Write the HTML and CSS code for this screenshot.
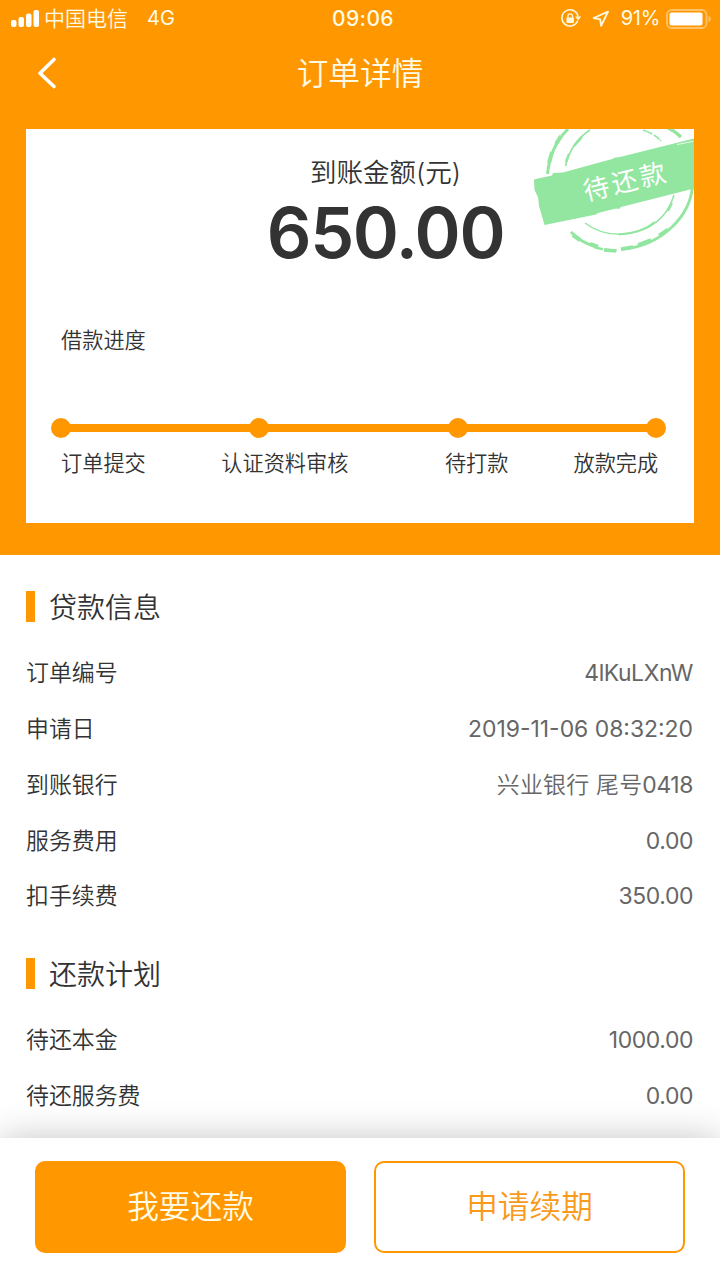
FILE: index.html
```html
<!DOCTYPE html>
<html lang="zh-CN">
<head>
<meta charset="utf-8">
<title>订单详情</title>
<link rel="stylesheet" href="styles.css">
</head>
<body>
<div class="app">
  <header class="hero">
    <div class="status">
      <div class="status-left">
        <svg class="signal" width="30" height="20" viewBox="0 0 30 20"><g fill="#fff"><rect x="1" y="11" width="5.500" height="7" rx="2"/><rect x="8.500" y="8" width="5.500" height="10" rx="2"/><rect x="16" y="4.500" width="5.500" height="13.500" rx="2"/><rect x="23.500" y="1" width="5.500" height="17" rx="2"/></g></svg>
        <span class="carrier">中国电信</span>
        <span class="network">4G</span>
      </div>
      <span class="clock">09:06</span>
      <div class="status-right">
        <svg class="lock" width="20" height="20" viewBox="0 0 20 20" fill="none" stroke="#fff8dc"><path d="M16.600 11.800A8.100 8.100 0 1 1 17 7.500" stroke-width="1.600"/><path d="M14 7.600h6.200l-3 4z" fill="#fff8dc" stroke="none"/><rect x="5.500" y="8.600" width="7.400" height="5.400" rx=".6" fill="#fff8dc" stroke="none"/><path d="M6.900 9V7.200a2.300 2.300 0 0 1 4.600 0V9" stroke-width="1.300"/></svg>
        <svg class="locate" width="18" height="18" viewBox="0 0 18 18" fill="none" stroke="#fff8dc" stroke-width="1.900" stroke-linejoin="round"><path d="M16 1.600L1.600 8l6.600 1.400.9 6.500z"/></svg>
        <span class="percent">91%</span>
        <svg class="battery" width="46" height="20" viewBox="0 0 46 20"><rect x="1" y="1" width="39.500" height="18" rx="4.500" fill="none" stroke="#ffc267" stroke-width="1.800"/><rect x="3.500" y="3.500" width="33" height="13" rx="2" fill="#fff"/><path d="M42.500 6.800q2.500 1 2.500 3.200t-2.500 3.200z" fill="#ffc267"/></svg>
      </div>
    </div>
    <nav class="nav">
      <svg class="back" width="22" height="34" viewBox="0 0 22 34" fill="none" stroke="#fff" stroke-width="3.600" stroke-linecap="round" stroke-linejoin="round"><path d="M18 3.500L4 17.300l14 13.200"/></svg>
      <h1 class="nav-title">订单详情</h1>
    </nav>
    <section class="card">
      <svg class="stamp" width="174" height="134" viewBox="520 129 174 134">
        <g fill="none" stroke="#92e6a0">
          <path d="M547.500 174Q550 147 568 129" stroke-width="3"/>
          <path d="M549 163l3-11M556 144l5-8" stroke-width="4"/>
          <path d="M565.500 166Q571 142 590 130" stroke-width="1.600"/>
          <path d="M566 162l3-8M574 146l8-9" stroke-width="2.400"/>
          <path d="M643 130Q655 134 661 141" stroke-width="1.600" stroke-dasharray="10 2 7 1"/>
          <path d="M668 128Q675 131 681 137" stroke-width="3.200"/>
          <path d="M585 223Q602 236 625 234Q664 229 674 195" stroke-width="1.500"/>
          <path d="M619 234.500Q642 233 655 222M668 211l4-8" stroke-width="2.200"/>
          <path d="M571 232Q580 242 594 246" stroke-width="2.800"/>
          <path d="M573 235l7 5M590 244l8 3" stroke-width="4.200"/>
          <path d="M594 247Q606 251 617 250" stroke-width="2.600" stroke-dasharray="9 2 12 2"/>
          <path d="M604 250l12 1" stroke-width="3.600"/>
          <path d="M621 249.500Q651 247 672 227Q690 210 692.500 187" stroke-width="2.800"/>
          <path d="M621 249l12-2M638 245l13-5M659 235.500l9-6" stroke-width="3.600"/>
        </g>
        <path d="M534 179.500l4-1 14-3 1-2.500 10-.5 50-13.800 1-1 6-.6 74-18.600V188.500l-73 18.500-2 2-3-.5-18 4.500-2 1.500-51.500 10.500-5.500-19-1-9-3.500-7z" fill="#92e6a0"/>
        <path d="M677 144.500l16-3" stroke="#fff" stroke-width=".8"/>
        <text class="stamp-text" x="586" y="201" transform="rotate(-14 586 201)">待还款</text>
      </svg>
      <div class="summary">
        <div class="amount-label">到账金额(元)</div>
        <div class="amount">650.00</div>
      </div>
      <h2 class="progress-title">借款进度</h2>
      <div class="track"><i class="dot"></i><i class="line"></i><i class="dot"></i><i class="line"></i><i class="dot"></i><i class="line"></i><i class="dot"></i></div>
      <div class="steps"><span class="step step-submit">订单提交</span><span class="step step-review">认证资料审核</span><span class="step step-pending">待打款</span><span class="step">放款完成</span></div>
    </section>
  </header>
  <main class="content">
    <section class="group">
      <h2 class="group-title">贷款信息</h2>
      <div class="row"><span class="key">订单编号</span><span class="value">4lKuLXnW</span></div>
      <div class="row"><span class="key">申请日</span><span class="value date">2019-11-06 08:32:20</span></div>
      <div class="row"><span class="key">到账银行</span><span class="value"><span class="bank">兴业银行 尾号</span>0418</span></div>
      <div class="row"><span class="key">服务费用</span><span class="value">0.00</span></div>
      <div class="row"><span class="key">扣手续费</span><span class="value">350.00</span></div>
    </section>
    <section class="group">
      <h2 class="group-title">还款计划</h2>
      <div class="row"><span class="key">待还本金</span><span class="value">1000.00</span></div>
      <div class="row"><span class="key">待还服务费</span><span class="value">0.00</span></div>
    </section>
  </main>
  <footer class="actions">
    <button class="btn btn-primary">我要还款</button>
    <button class="btn btn-outline">申请续期</button>
  </footer>
</div>
</body>
</html>
```
FILE: styles.css
```css
* { box-sizing: border-box; }
body { margin: 0; background: #fff; color: #333; font-family: Inter, "Noto Sans CJK SC", sans-serif; font-weight: 350; }
h1, h2 { margin: 0; font-weight: 350; }
svg { display: block; flex: none; }
.app { width: 720px; height: 1280px; display: flex; flex-direction: column; overflow: hidden; }
.hero { height: 555px; flex: none; background: #ff9700; padding: 0 26px; }
.status { height: 37px; margin: 0 -26px; padding: 0 8px 0 10px; display: grid; grid-template-columns: 1fr auto 1fr; align-items: center; color: #fffbe6; font-size: 20px; line-height: 37px; }
.status-left, .status-right { display: flex; align-items: center; }
.status-right { justify-content: flex-end; }
.carrier { margin-left: 4px; font-size: 21px; }
.network { margin-left: 19px; font-size: 20px; font-weight: 400; }
.clock { padding-left: 4px; font-weight: 500; font-size: 21px; letter-spacing: .4px; line-height: 36px; }
.lock { margin-right: 11px; }
.locate { margin-right: 11px; }
.percent { margin-right: 6px; font-size: 20px; font-weight: 400; letter-spacing: -.3px; }
.nav { height: 92px; display: grid; grid-template-columns: 60px 1fr 60px; }
.back { margin: 19px 0 0 10px; }
.nav-title { padding-top: 13px; text-align: center; color: #fffbe6; font-size: 31.7px; line-height: 48px; }
.card { position: relative; height: 394px; padding: 25px 26px 0; background: #fff; overflow: hidden; }
.stamp { position: absolute; top: 0; right: 0; }
.stamp-text { fill: #fff; font-size: 26px; font-weight: 400; letter-spacing: 3px; }
.summary { padding-left: 51px; text-align: center; }
.amount-label { font-size: 26.5px; line-height: 37px; }
.amount { font-size: 70px; font-weight: 600; line-height: 84px; letter-spacing: -1.4px; }
.progress-title { margin-top: 51px; padding-left: 9px; font-size: 21.2px; line-height: 28px; }
.track { display: flex; align-items: center; height: 20px; margin-top: 64px; margin-left: -1.5px; width: 615.5px; }
.dot { width: 20px; height: 20px; border-radius: 50%; background: #ff9700; flex: none; }
.line { flex: 1; height: 8px; margin: 0 -2px; background: #ff9700; }
.steps { display: flex; margin-top: 11px; padding-left: 9px; font-size: 21.2px; line-height: 28px; }
.step { white-space: nowrap; }
.step-submit { margin-right: 75.5px; }
.step-review { margin-right: 96.5px; }
.step-pending { margin-right: 65px; }
.content { flex: 1; padding: 0 27px 0 26px; }
.group { padding-top: 30px; }
.group + .group { padding-top: 28px; }
.group-title { display: flex; align-items: center; gap: 14px; height: 44px; margin-bottom: 16.6px; font-size: 28px; line-height: 44px; padding-top: 1px; }
.group-title::before { content: ""; width: 9px; height: 31px; margin-top: -2px; background: #ff9700; }
.row { display: flex; justify-content: space-between; align-items: center; height: 55.7px; font-size: 22.9px; line-height: 32px; }
.value { color: #666; font-weight: 400; letter-spacing: -.4px; }
.date { letter-spacing: 0; }
.bank { font-weight: 350; letter-spacing: .25px; }
.actions { position: relative; height: 142px; flex: none; padding: 23px 35px 0; display: flex; gap: 28px; background: #fff; box-shadow: 0 0 34px rgba(0, 0, 0, .23); }
.btn { flex: 1; height: 92px; border: 2px solid #ff9700; border-radius: 10px; padding: 0; font: 350 31.7px/88px Inter, "Noto Sans CJK SC", sans-serif; }
.btn-primary { background: #ff9700; color: #fffbe6; }
.btn-outline { background: #fff; color: #f99a1c; }
```
